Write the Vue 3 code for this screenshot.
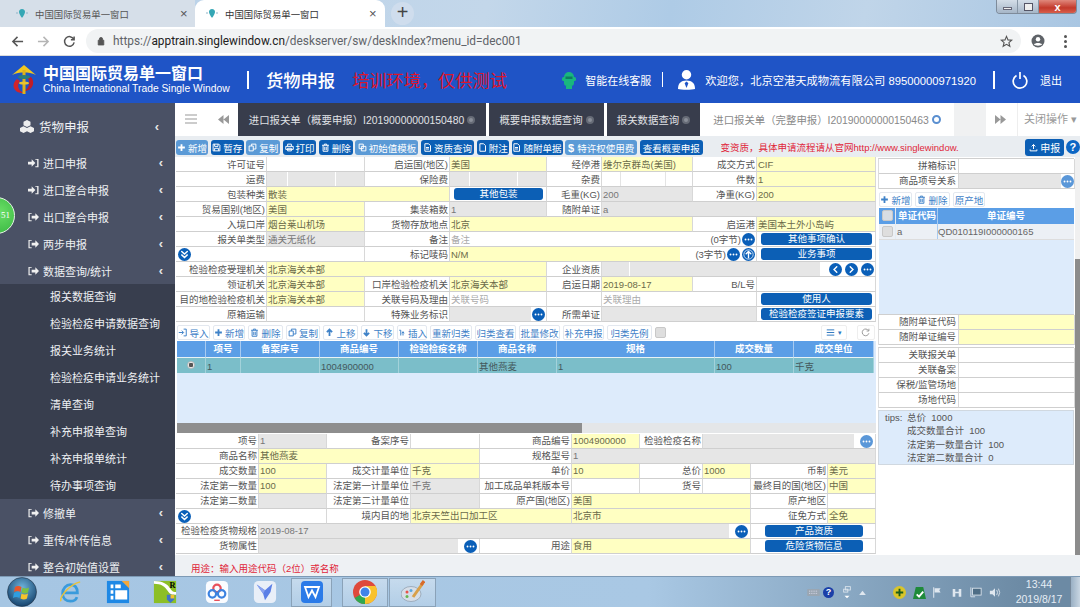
<script setup>
const lab = (t, s = 1) => ({ k: 'lab', t, s })
const y = (t = '', s = 1, x = {}) => ({ k: 'y', t, s, ...x })
const g = (t = '', s = 1, x = {}) => ({ k: 'g', t, s, ...x })
const w = (t = '', s = 1, x = {}) => ({ k: 'w', t, s, ...x })
const ph = (t = '', s = 1, x = {}) => ({ k: 'ph', t, s, ...x })
const blank = (s = 1, x = {}) => ({ k: '', t: '', s, ...x })

const form1 = [
  lab('许可证号'), w(), lab('启运国(地区)'), y('美国'), lab('经停港'), y('维尔京群岛(美国)'), lab('成交方式'), y('CIF'),
  lab('运费'), g('', 1, { boxes: [21, 48, 29] }), lab('保险费'), g('', 1, { boxes: [20, 48, 29] }), lab('杂费'), w('', 1, { boxes: [19, 45, 27] }), lab('件数'), y('1'),
  lab('包装种类'), y('散装', 2), blank(1, { btn: '其他包装' }), lab('毛重(KG)'), g('200'), lab('净重(KG)'), y('200'),
  lab('贸易国别(地区)'), y('美国'), lab('集装箱数'), g('1'), lab('随附单证'), g('a', 3),
  lab('入境口岸'), y('烟台莱山机场'), lab('货物存放地点'), y('北京', 3), lab('启运港'), y('美国本土外小岛屿'),
  lab('报关单类型'), g('通关无纸化'), lab('备注'), ph('备注', 4, { tail: '(0字节)', dots: ['more'] }), blank(1, { btn: '其他事项确认' }),
  blank(2, { dots: ['down2'], lead: true }), lab('标记唛码'), y('N/M', 4, { fw: 230, tail: '(3字节)', dots: ['more', 'up'] }), blank(1, { btn: '业务事项' }),
  lab('检验检疫受理机关'), y('北京海关本部', 3), lab('企业资质'), g('', 3, { pre: true, dots: ['left', 'right', 'more'] }),
  lab('领证机关'), y('北京海关本部'), lab('口岸检验检疫机关'), y('北京海关本部'), lab('启运日期'), y('2019-08-17'), lab('B/L号'), w(),
  lab('目的地检验检疫机关'), y('北京海关本部'), lab('关联号码及理由'), ph('关联号码'), blank(), ph('关联理由', 2), blank(1, { btn: '使用人' }),
  lab('原箱运输'), w(), lab('特殊业务标识'), g('', 1, { dots: ['more'] }), lab('所需单证'), g('', 2), blank(1, { btn: '检验检疫签证申报要素' })
]

const form2 = [
  lab('项号'), g('1'), lab('备案序号'), w(), lab('商品编号'), y('1004900000'), lab('检验检疫名称'), g('', 3, { dots: ['more'], light: true }),
  lab('商品名称'), y('其他燕麦', 3), lab('规格型号'), g('1', 5),
  lab('成交数量'), y('100'), lab('成交计量单位'), y('千克'), lab('单价'), y('10'), lab('总价'), y('1000'), lab('币制'), y('美元'),
  lab('法定第一数量'), y('100'), lab('法定第一计量单位'), g('千克'), lab('加工成品单耗版本号'), w(), lab('货号'), w(), lab('最终目的国(地区)'), y('中国'),
  lab('法定第二数量'), g(), lab('法定第二计量单位'), g(), lab('原产国(地区)'), y('美国', 3), lab('原产地区'), w(),
  blank(2, { dots: ['down2'], lead: true }), lab('境内目的地'), y('北京天竺出口加工区', 2), y('北京市', 3), lab('征免方式'), y('全免'),
  lab('检验检疫货物规格'), g('2019-08-17', 7, { dots: ['more'] }), blank(2, { btn: '产品资质', wide: true }),
  lab('货物属性'), g('', 3, { dots: ['more'] }), lab('用途'), y('食用', 3), blank(2, { btn: '危险货物信息', wide: true })
]

const sections = [
  { id: 'top', cls: 'grid-top', cells: form1 },
  { id: 'bot', cls: 'grid-bot', cells: form2 }
]

const ic = {
  plus: 'M6 1.5v9M1.5 6h9',
  save: 'M1.5 1.5h7.5l1.5 1.5v7.5h-9zM3.5 1.5v3h4.5v-3M3.5 10.5V7h5v3.5',
  copy: 'M1.5 4h5.5v6.5H1.5zM4.5 4V1.5h6v6.5H7',
  print: 'M3.5 4V1.5h5V4M1 4.5h10v4H1zM3.5 7h5v3.5h-5z',
  trash: 'M1.5 3h9M4.5 3V1.5h3V3M2.8 3v8h6.4V3M5 5v4.5M7 5v4.5',
  tpl: 'M1.5 1.5h5.5v6H1.5zM4.5 4.5h6v6h-6z',
  doc: 'M2.5 1h5l2.5 2.5V11h-7.5zM4 6h4M4 8h4',
  attach: 'M2.5 1h5l2.5 2.5V11h-7.5z',
  imp: 'M1 6h6M5 3.5 7.5 6 5 8.5M7.5 1.5h3.5v9H7.5',
  up: 'M6 10.5V2M2.5 5.5 6 2l3.5 3.5',
  down: 'M6 1.5V10M2.5 6.5 6 10l3.5-3.5',
  ins: 'M3 3h2v7M8 10V5M6.5 7 8 5l1.5 2',
  upload: 'M6 8V2M3.5 4.5 6 2l2.5 2.5M1.5 8.5v2h9v-2'
}

const tool1 = [
  { t: '新增', i: 'plus', w: 32, light: true }, { t: '暂存', i: 'save', w: 33 }, { t: '复制', i: 'copy', w: 34, light: true },
  { t: '打印', i: 'print', w: 33 }, { t: '删除', i: 'trash', w: 34 }, { t: '初始值模板', i: 'tpl', w: 63, light: true },
  { t: '资质查询', i: 'doc', w: 53 }, { t: '附注', i: 'attach', w: 32 }, { t: '随附单据', i: 'doc', w: 51 },
  { t: '特许权使用费', i: '$', w: 72, light: true }, { t: '查看概要申报', i: '', w: 63 }
]
const tool2 = [
  { t: '导入', i: 'imp', w: 33 }, { t: '新增', i: 'plus', w: 32 }, { t: '删除', i: 'trash', w: 35 }, { t: '复制', i: 'copy', w: 34 },
  { t: '上移', i: 'up', w: 35 }, { t: '下移', i: 'down', w: 33 }, { t: '插入', i: 'ins', w: 30 }, { t: '重新归类', i: '', w: 42 },
  { t: '归类查看', i: '', w: 41 }, { t: '批量修改', i: '', w: 41 }, { t: '补充申报', i: '', w: 41 }, { t: '归类先例', i: '', w: 45 }
]
const heads = [['', 29], ['项号', 35], ['备案序号', 79], ['商品编号', 79], ['检验检疫名称', 79], ['商品名称', 79], ['规格', 158], ['成交数量', 79], ['成交单位', 80]]
const row = ['', '1', '', '1004900000', '', '其他燕麦', '1', '100', '千克']

const navTop = [
  { t: '进口申报', i: 'in' }, { t: '进口整合申报', i: 'in' }, { t: '出口整合申报', i: 'out' },
  { t: '两步申报', i: 'out' }, { t: '数据查询/统计', i: 'out' }
]
const navSub = ['报关数据查询', '检验检疫申请数据查询', '报关业务统计', '检验检疫申请业务统计', '清单查询', '补充申报单查询', '补充申报单统计', '待办事项查询']
const navBot = [{ t: '修撤单', i: 'out' }, { t: '重传/补传信息', i: 'out' }, { t: '整合初始值设置', i: 'out' }]

const dotG = {
  more: 'M3.8 7h.01M7 7h.01M10.2 7h.01',
  left: 'M8.4 4 5.4 7l3 3',
  right: 'M5.6 4l3 3-3 3',
  up: 'M7 10.5V4M4.5 6.2 7 3.8l2.5 2.4',
  down2: 'M4 3.8 7 6.6l3-2.8M4 7.4l3 2.8 3-2.8'
}
const tabsDark = [
  { t: '进口报关单（概要申报）I20190000000150480', w: 248 },
  { t: '概要申报数据查询', w: 115 },
  { t: '报关数据查询', w: 93 }
]
const relate = ['关联报关单', '关联备案', '保税/监管场地', '场地代码']
</script>

<template>
  <div class="page">
    <div class="strip">
      <div class="ctab idle">
        <svg class="fav" viewBox="0 0 12 12"><path d="M6 1c2 0 3 1.4 3 3 0 2-3 6-3 6S3 6 3 4c0-1.600 1-3 3-3z" fill="#35a7b5" /><path d="M0 5h2M10 5h2" stroke="#8fb5c9" /></svg>
        <span class="ctitle">中国国际贸易单一窗口</span><span class="cx">×</span>
      </div>
      <div class="ctab act">
        <svg class="fav" viewBox="0 0 12 12"><path d="M6 1c2 0 3 1.4 3 3 0 2-3 6-3 6S3 6 3 4c0-1.600 1-3 3-3z" fill="#35a7b5" /><path d="M0 5h2M10 5h2" stroke="#8fb5c9" /></svg>
        <span class="ctitle">中国国际贸易单一窗口</span><span class="cx">×</span>
      </div>
      <div class="newtab">+</div>
      <div class="winbtns"><i class="wb"><b class="min"></b></i><i class="wb"><b class="max"></b></i><i class="wb close">x</i></div>
    </div>

    <div class="addr">
      <svg class="nav-ic" viewBox="0 0 14 14"><path d="M13 7H2M7 2 2 7l5 5" fill="none" stroke="#555" stroke-width="1.6" /></svg>
      <svg class="nav-ic" viewBox="0 0 14 14"><path d="M1 7h11M7 2l5 5-5 5" fill="none" stroke="#b5b5b5" stroke-width="1.6" /></svg>
      <svg class="nav-ic" viewBox="0 0 14 14"><path d="M11.500 4.500A5.200 5.200 0 1 0 12 8M12 1.500v3.500H8.500" fill="none" stroke="#555" stroke-width="1.600" /></svg>
      <div class="pill">
        <svg class="lock" viewBox="0 0 10 12"><path d="M1.500 5h7v6h-7zM3 5V3.500a2 2 0 0 1 4 0V5" fill="#555" stroke="#555" /></svg>
        <span class="url"><em>https://</em>apptrain.singlewindow.cn<em>/deskserver/sw/deskIndex?menu_id=dec001</em></span>
        <svg class="star" viewBox="0 0 14 14"><path d="M7 1.500 8.600 5.300l4 .3-3 2.600 1 4L7 10l-3.600 2.200 1-4-3-2.600 4-.3z" fill="none" stroke="#555" stroke-width="1.200" /></svg>
      </div>
      <svg class="acct" viewBox="0 0 14 14"><circle cx="7" cy="7" r="6.500" fill="#5f6368" /><circle cx="7" cy="5.200" r="2.200" fill="#fff" /><path d="M3 10.500c1-2 7-2 8 0-1 1.500-7 1.500-8 0z" fill="#fff" /></svg>
      <span class="kebab"><i></i><i></i><i></i></span>
    </div>

    <header class="hdr">
      <svg class="logo" viewBox="0 0 24 30">
        <path d="M5 14C-2 20 2 29 13 28c-6-1-9-7-5-12z" fill="#d3232a" />
        <path d="M19 12c5 6 1 14-7 14 4-2 7-7 4-13z" fill="#c01d28" />
        <path d="M12 0 24 10c-4-2-8-2.500-12-2.500S4 8 0 10z" fill="#f1c71f" />
        <rect x="10.500" y="5" width="3" height="24" fill="#e0b21a" />
        <ellipse cx="12" cy="12" rx="6" ry="2" fill="#2a7e78" />
        <ellipse cx="12" cy="18" rx="5" ry="1.600" fill="#e8c430" />
      </svg>
      <div class="brand">
        <div class="cn">中国国际贸易单一窗口</div>
        <div class="en">China International Trade Single Window</div>
      </div>
      <i class="vbar first"></i>
      <span class="modname">货物申报</span>
      <span class="warn">培训环境，仅供测试</span>
      <div class="hright">
        <svg class="robot" viewBox="0 0 14 18"><path d="M2 6a5 5 0 0 1 10 0v6a3 3 0 0 1-3 3H5a3 3 0 0 1-3-3z" fill="#19b67e" /><rect x="0" y="6" width="14" height="4" rx="1.500" fill="#19b67e" /><rect x="3.500" y="5.500" width="7" height="2.500" fill="#0e7e60" /><rect x="4" y="15" width="6" height="3" fill="#19b67e" /></svg>
        <span class="cs">智能在线客服</span>
        <i class="vbar small"></i>
        <svg class="user" viewBox="0 0 18 22"><circle cx="9" cy="6" r="5" fill="#fff" /><path d="M0 21c0-6 3-9 9-9s9 3 9 9c-3 1-15 1-18 0z" fill="#fff" /><path d="M9 13l2 2-2 5-2-5z" fill="#1f54c6" /></svg>
        <span class="welcome">欢迎您，北京空港天成物流有限公司 89500000971920</span>
        <i class="vbar"></i>
        <svg class="power" viewBox="0 0 16 18"><path d="M4.500 4.500a6.800 6.800 0 1 0 7 0M8 1v7" fill="none" stroke="#fff" stroke-width="1.700" /></svg>
        <span class="quit">退出</span>
      </div>
    </header>

    <div class="body">
      <aside class="side">
        <div class="sbadge">51</div>
        <div class="shead">
          <svg class="cubes" viewBox="0 0 14 13"><path d="M7 0l3.500 1.800v3.400L7 7 3.500 5.200V1.800zM3.500 6.200 7 8v3.200L3.500 13 0 11.200V8zM10.500 6.200 14 8v3.200L10.500 13 7 11.200V8z" fill="#eee" /></svg>
          <span>货物申报</span><span class="chev top">‹</span>
        </div>
        <div v-for="n in navTop" :key="n.t" class="nitem">
          <svg class="nic" viewBox="0 0 12 10"><path v-if="n.i === 'in'" d="M0 3.500h4V1l4 4-4 4V6.500H0zM8 .5h3.500v9H8v-1h2v-7H8z" fill="#f0f0f0" /><path v-else d="M4 .5H.5v9H4v-1H1.800v-7H4zM4 3.500h4V1l4 4-4 4V6.500H4z" fill="#f0f0f0" /></svg>
          <span>{{ n.t }}</span><span class="chev">‹</span>
        </div>
        <div class="sub"><div v-for="s in navSub" :key="s" class="sitem">{{ s }}</div></div>
        <div v-for="n in navBot" :key="n.t" class="nitem">
          <svg class="nic" viewBox="0 0 12 10"><path d="M4 .5H.5v9H4v-1H1.800v-7H4zM4 3.500h4V1l4 4-4 4V6.500H4z" fill="#f0f0f0" /></svg>
          <span>{{ n.t }}</span><span class="chev">‹</span>
        </div>
      </aside>

      <main class="main">
        <div class="tabs">
          <svg class="burger" viewBox="0 0 12 10"><path d="M0 1h12M0 5h12M0 9h12" stroke="#999" stroke-width="1.200" /></svg>
          <svg class="rew" viewBox="0 0 11 9"><path d="M5.500 0v9L0 4.500zM11 0v9L5.500 4.500z" fill="#999" /></svg>
          <div v-for="tb in tabsDark" :key="tb.t" class="dtab" :style="{ width: tb.w + 'px' }">{{ tb.t }}<i class="tx"></i></div>
          <div class="atab">进口报关单（完整申报）I20190000000150463<i class="tx on"></i></div>
          <div class="tfill"></div>
          <svg class="fwd" viewBox="0 0 11 9"><path d="M0 0v9l5.500-4.500zM5.500 0v9L11 4.500z" fill="#999" /></svg>
          <div class="closeops">关闭操作 ▾</div>
        </div>

        <div class="tool">
          <button v-for="b in tool1" :key="b.t" class="tbtn" :class="{ light: b.light }" :style="{ width: b.w + 'px' }">
            <b v-if="b.i === '$'" class="dollar">$</b>
            <svg v-else-if="b.i" class="tic" :class="{ thick: b.i === 'plus' }" viewBox="0 0 12 12"><path :d="ic[b.i]" /></svg>
            {{ b.t }}
          </button>
          <span class="notice">变资质，具体申请流程请从官网http://www.singlewindow.</span>
          <button class="tbtn submit"><svg class="tic" viewBox="0 0 12 12"><path :d="ic.upload" /></svg>申报</button>
          <span class="help">?</span>
        </div>

        <div class="work">
          <div class="col-left">
            <div class="form grid-top">
              <div v-for="(c, i) in sections[0].cells" :key="i" class="cell" :class="{ lab: c.k === 'lab', lead: c.lead }" :style="{ gridColumn: 'span ' + c.s }">
                <template v-if="c.k === 'lab'">{{ c.t }}</template>
                <template v-else>
                  <span v-if="c.boxes" class="boxes"><i v-for="(bw, j) in c.boxes" :key="j" :class="c.k" :style="{ width: bw + 'px' }"></i></span>
                  <span v-else-if="c.k" class="fill" :class="c.k" :style="c.fw ? { flex: 'none', width: c.fw + 'px' } : null"><i v-if="c.pre" class="prebox"></i>{{ c.t }}</span>
                  <span v-if="c.tail" class="tail">{{ c.tail }}</span>
                  <span v-if="c.dots" class="dots" :class="{ far: c.pre }">
                    <svg v-for="d in c.dots" :key="d" class="dot" viewBox="0 0 14 14"><circle cx="7" cy="7" r="7" :fill="c.light ? '#5a97d8' : '#0a5fb8'" /><circle v-if="d === 'up'" cx="7" cy="7" r="5" fill="none" stroke="#fff" stroke-width=".8" /><path :d="dotG[d]" class="dotp" :class="{ mp: d === 'more' }" /></svg>
                  </span>
                  <button v-if="c.btn" class="fbtn" :class="{ wide: c.wide }">{{ c.btn }}</button>
                </template>
              </div>
            </div>

            <div class="listbar">
              <button v-for="b in tool2" :key="b.t" class="lbtn" :style="{ width: b.w + 'px' }">
                <svg v-if="b.i" class="tic" :class="{ thick: b.i === 'plus' || b.i === 'up' || b.i === 'down' }" viewBox="0 0 12 12"><path :d="ic[b.i]" /></svg>{{ b.t }}
              </button>
              <span class="chk"></span>
              <span class="lspacer"></span>
              <button class="lbtn cols"><svg class="tic" viewBox="0 0 12 12"><path d="M1 2.500h10M1 6h10M1 9.500h10" /></svg><small>▾</small></button>
              <button class="lbtn refresh"><svg class="tic" viewBox="0 0 12 12"><path d="M10 3.500A4.500 4.500 0 1 0 10.500 7M10.500 1v3H7.500" /></svg></button>
            </div>
            <div class="tbl">
              <div class="thead"><span v-for="h in heads" :key="h[0]" :style="{ width: h[1] + 'px' }">{{ h[0] }}</span></div>
              <div class="trow">
                <span v-for="(v, i) in row" :key="i" :style="{ width: heads[i][1] + 'px' }">
                  <i v-if="i === 0" class="radio"></i>{{ v }}
                </span>
              </div>
              <div class="tempty"></div>
              <div class="hscroll"><i></i></div>
            </div>

            <div class="form grid-bot">
              <div v-for="(c, i) in sections[1].cells" :key="i" class="cell" :class="{ lab: c.k === 'lab', lead: c.lead }" :style="{ gridColumn: 'span ' + c.s }">
                <template v-if="c.k === 'lab'">{{ c.t }}</template>
                <template v-else>
                  <span v-if="c.k" class="fill" :class="c.k">{{ c.t }}</span>
                  <span v-if="c.dots" class="dots gapd">
                    <svg v-for="d in c.dots" :key="d" class="dot" viewBox="0 0 14 14"><circle cx="7" cy="7" r="7" :fill="c.light ? '#5a97d8' : '#0a5fb8'" /><path :d="dotG[d]" class="dotp" :class="{ mp: d === 'more' }" /></svg>
                  </span>
                  <button v-if="c.btn" class="fbtn" :class="{ wide: c.wide }">{{ c.btn }}</button>
                </template>
              </div>
            </div>
          </div>

          <div class="col-right">
            <div class="rgrid">
              <div class="rl">拼箱标识</div><div class="rv"></div>
              <div class="rl">商品项号关系</div>
              <div class="rv gr"><span class="fill g"></span><svg class="dot" viewBox="0 0 14 14"><circle cx="7" cy="7" r="7" fill="#5a97d8" /><path :d="dotG.more" class="dotp mp" /></svg></div>
            </div>
            <div class="rbar">
              <button class="lbtn rb33"><svg class="tic thick" viewBox="0 0 12 12"><path :d="ic.plus" /></svg>新增</button>
              <button class="lbtn rb35"><svg class="tic" viewBox="0 0 12 12"><path :d="ic.trash" /></svg>删除</button>
              <button class="lbtn rb32">原产地</button>
            </div>
            <div class="rhead"><span class="rc0"><i class="chk hchk"></i></span><span class="rc1">单证代码</span><span class="rc2">单证编号</span></div>
            <div class="rrow"><span class="rc0"><i class="chk"></i></span><span class="rc1">a</span><span class="rc2 tl">QD010119I000000165</span></div>
            <div class="rempty"></div>
            <div class="rgrid">
              <div class="rl">随附单证代码</div><div class="rv ye"></div>
              <div class="rl">随附单证编号</div><div class="rv ye"></div>
            </div>
            <div class="rgrid mt3">
              <template v-for="r in relate" :key="r"><div class="rl">{{ r }}</div><div class="rv"></div></template>
            </div>
            <div class="tips">
              <div><span class="tk">tips:</span>总价&nbsp;&nbsp;1000</div>
              <div class="ti">成交数量合计&nbsp;&nbsp;100</div>
              <div class="ti">法定第一数量合计&nbsp;&nbsp;100</div>
              <div class="ti">法定第二数量合计&nbsp;&nbsp;0</div>
            </div>
          </div>

          <div class="vscroll"><i></i></div>
        </div>

        <div class="hint">用途：输入用途代码（2位）或名称</div>
      </main>
    </div>

    <footer class="taskbar">
      <svg class="orb" viewBox="0 0 30 30">
        <defs><radialGradient id="og" cx=".5" cy=".35" r=".7"><stop offset="0" stop-color="#6fb4dc" /><stop offset="1" stop-color="#0f3b66" /></radialGradient></defs>
        <circle cx="15" cy="15" r="14.500" fill="url(#og)" stroke="#234" stroke-width=".6" />
        <path d="M8 10q3-2 6.500 0l-1 5q-3-2-6.500 0z" fill="#e8562a" /><path d="M15.500 10.500q3 2 6.500 0l-1 5q-3 2-6.500 0z" fill="#7cc242" />
        <path d="M7 16q3-2 6.500 0l-1 5q-3-2-6.500 0z" fill="#2f9ee0" /><path d="M14.500 16.500q3 2 6.500 0l-1 5q-3 2-6.500 0z" fill="#f6c32c" />
      </svg>
      <svg class="tk26 ie" viewBox="0 0 26 26"><path d="M7 14h14c0-6-3-9-7.500-9S5 9 5 14.500 9 23 13.500 23c3.500 0 6-1.500 7-4.500" fill="none" stroke="#3a9bdc" stroke-width="3" /><path d="M3 23C2 18 12 5 24 2" fill="none" stroke="#e9c23a" stroke-width="1.600" /></svg>
      <svg class="tk26 fo" viewBox="0 0 26 26"><path d="M1 1h24v24H1z" fill="#1e88e5" /><path d="M17 1h8v8z" fill="#f2a83b" /><path d="M5 5h3v4H5zM5 11h3v4H5zM5 17h3v4H5zM10 11h13v10H10zM10 5h6v4h-6z" fill="#fff" /></svg>
      <svg class="tk26 rr" viewBox="0 0 26 26"><path d="M1 1h24v24H1z" fill="#8cbf26" /><path d="M1 4c8 0 12 3 15 8s6 4 9 4v-3c-4 0-5-2-7-5S11 1 1 1z" fill="#fff" /><text x="18" y="9" font-size="9" font-weight="700" font-family="Liberation Serif">R</text><path d="M15 16h8v5l-4 4-4-4z" fill="#3f74c9" /><path d="M19 16h4v4h-4z" fill="#f2c230" /></svg>
      <svg class="tk26 bd" viewBox="0 0 26 26"><rect x="1" y="1" width="24" height="24" rx="5" fill="#fafcff" /><circle cx="13" cy="9" r="4" fill="none" stroke="#e8505b" stroke-width="2.400" /><circle cx="8" cy="15" r="4" fill="none" stroke="#3b82e0" stroke-width="2.400" /><circle cx="18" cy="15" r="4" fill="none" stroke="#3b82e0" stroke-width="2.400" /><path d="M10 22h6" stroke="#e8505b" stroke-width="1.500" /></svg>
      <svg class="tk26 fe" viewBox="0 0 26 26"><rect x="1" y="1" width="24" height="24" rx="5" fill="#e9eff8" /><path d="M4 5l9 6 8-7-2 9-6 9-2-7z" fill="#5b7fe6" /><path d="M4 5l9 6-2 4z" fill="#8aa3ef" /></svg>
      <div class="tslot wps"><svg class="tk22" viewBox="0 0 22 22"><rect width="22" height="22" rx="4" fill="#2b7be8" /><path d="M4 6h14l-3.500 10-3.500-6.500L7.500 16z" fill="none" stroke="#fff" stroke-width="1.800" /></svg></div>
      <div class="tslot chrome"><svg class="tk24" viewBox="0 0 24 24"><circle cx="12" cy="12" r="12" fill="#de4a3c" /><path d="M12 12 1.600 18A12 12 0 0 0 12 24a12 12 0 0 0 4-1z" fill="#2fa84f" /><path d="M12 6h10.500A12 12 0 0 1 12 24z" fill="#f9c22d" /><circle cx="12" cy="12" r="5.800" fill="#fff" /><circle cx="12" cy="12" r="4.500" fill="#3f84e8" /></svg></div>
      <div class="tslot paint"><svg class="tk24" viewBox="0 0 24 24"><ellipse cx="10" cy="14" rx="10" ry="7.500" fill="#d6dee8" stroke="#8d9bab" stroke-width=".7" /><circle cx="6" cy="12" r="1.500" fill="#e9534a" /><circle cx="10" cy="10.500" r="1.500" fill="#5aa7e0" /><circle cx="6" cy="16.500" r="1.500" fill="#66b650" /><path d="M12 17 22 3" stroke="#d8a04a" stroke-width="3" /><path d="M20 5 23 1" stroke="#d86b2a" stroke-width="3" /></svg></div>
      <div class="tray">
        <svg class="tr1" viewBox="0 0 14 10"><rect y="1" width="14" height="8" rx="1" fill="#9aa6b2" /><path d="M2 3.500h10M2 6h10" stroke="#dde" stroke-dasharray="1 1" /></svg>
        <span class="trq">?</span>
        <svg class="tr2" viewBox="0 0 12 16"><rect x="4" y="1" width="6" height="4" fill="none" stroke="#dfe7ef" /><rect x="2" y="4" width="5" height="3.500" fill="none" stroke="#dfe7ef" /><path d="M3 12h6l-3 3z" fill="#fff" /></svg>
        <svg class="tr3" viewBox="0 0 8 6"><path d="M0 6 4 1l4 5z" fill="#dfe7ef" /></svg>
        <svg class="tr4" viewBox="0 0 14 14"><circle cx="7" cy="7" r="7" fill="#d9c52a" /><path d="M7 3v8M3 7h8" stroke="#1a5c1a" stroke-width="2" /></svg>
        <svg class="tr5" viewBox="0 0 14 14"><path d="M3 1h8l3 13H0z" fill="#1f8a3a" /><path d="M4 9l2.500 2.500L11 6" fill="none" stroke="#fff" stroke-width="2" /></svg>
        <svg class="tr6" viewBox="0 0 14 14"><path d="M2 1v12" stroke="#dfe7ef" stroke-width="1.200" /><path d="M3 2h7l-1.500 2.500L10 7H3z" fill="#dfe7ef" /></svg>
        <svg class="tr6" viewBox="0 0 14 14"><path d="M2 3h3v9H2zM9 3h3v9H9zM5 6h4v2H5z" fill="#dfe7ef" /></svg>
        <svg class="tr6" viewBox="0 0 14 14"><rect x="3" y="2" width="10" height="8" fill="#4e6d85" stroke="#dfe7ef" /><path d="M1 1v11h5" fill="none" stroke="#dfe7ef" /></svg>
        <svg class="tr6" viewBox="0 0 14 14"><path d="M1 5h3l3-3v10L4 9H1z" fill="#dfe7ef" /><path d="M9 4q2 3 0 6M11 2.500q3 4.500 0 9" fill="none" stroke="#dfe7ef" /></svg>
        <div class="clock"><div>13:44</div><div>2019/8/17</div></div>
        <div class="showdesk"></div>
      </div>
    </footer>
  </div>
</template>

<style>
html, body { margin: 0; padding: 0; overflow: hidden; }
</style>

<style scoped>
.page { width: 1080px; height: 607px; overflow: hidden; display: flex; flex-direction: column; font-family: "Liberation Sans", "Noto Sans CJK SC", sans-serif; color: #444; background: #fff; }
.page * { box-sizing: border-box; }
button { font-family: inherit; border: 0; padding: 0; }
i, em { font-style: normal; }

.strip { height: 27px; flex: none; display: flex; align-items: stretch; background: linear-gradient(100deg, #b7d0e8 0%, #c3d7ea 45%, #aecbe6 62%, #c0d5e9 80%, #a9c6e2 100%); }
.ctab { display: flex; align-items: center; font-size: 9.4px; color: #555; }
.ctab.idle { width: 195px; padding-left: 16px; background: #d6dfe9; border-radius: 0 0 0 0; }
.ctab.act { width: 190px; padding-left: 11px; background: #fff; border-radius: 9px 9px 0 0; color: #333; }
.fav { width: 12px; height: 12px; margin-right: 7px; }
.ctitle { width: 144px; white-space: nowrap; }
.ctab.idle .ctitle { width: 145px; }
.cx { font-size: 13px; color: #555; }
.newtab { width: 23px; height: 23px; margin: 2px 0 0 6px; border-radius: 50%; background: #cfdded; color: #444; font-size: 20px; line-height: 21px; text-align: center; }
.winbtns { margin-left: auto; margin-right: 3px; width: 81px; height: 14px; display: flex; border: 1px solid #7e8b9a; border-top: 0; border-radius: 0 0 4px 4px; overflow: hidden; }
.wb { flex: 0 0 21px; background: linear-gradient(#d3dde8, #a6b6c7); border-right: 1px solid #8796a6; position: relative; display: flex; align-items: center; justify-content: center; }
.wb .min { width: 9px; height: 3px; background: #eee; border: 1px solid #667; margin-top: 4px; }
.wb .max { width: 9px; height: 8px; border: 1.500px solid #556; background: #eee; }
.wb.close { flex: 1; background: linear-gradient(#e0887c, #c3392b 60%, #d85f4c); color: #fff; font-size: 11px; font-weight: 700; border: 0; }

.addr { height: 29px; flex: none; display: flex; align-items: center; background: #fff; border-bottom: 1px solid #dcdcdc; padding-left: 11px; }
.nav-ic { width: 13px; height: 13px; margin-right: 13px; }
.pill { width: 935px; height: 24px; margin-left: -3px; border-radius: 12px; background: #f1f3f4; display: flex; align-items: center; padding-left: 11px; }
.lock { width: 8px; height: 10px; margin-right: 8px; }
.url { font: 11.850px Roboto, "Liberation Sans", sans-serif; color: #222; white-space: nowrap; }
.url em { color: #5f6368; }
.star { width: 13px; height: 13px; margin-left: auto; margin-right: 8px; }
.acct { width: 14px; height: 14px; margin-left: 10px; }
.kebab { display: flex; flex-direction: column; gap: 2px; margin-left: 19px; }
.kebab i { width: 3px; height: 3px; border-radius: 50%; background: #555; }

.hdr { height: 47px; flex: none; background: #1f54c6; display: flex; align-items: center; padding-left: 12px; color: #fff; }
.logo { width: 24px; height: 30px; }
.brand { margin-left: 7px; width: 186px; }
.cn { font-size: 16px; line-height: 19px; font-weight: 700; white-space: nowrap; }
.en { font-size: 10.300px; line-height: 12px; white-space: nowrap; font-family: "Liberation Sans", sans-serif; }
.vbar { width: 2px; height: 18px; background: #fff; margin: 0 17px 0 17px; flex: none; }
.vbar.first { margin-left: 18px; }
.vbar.small { height: 15px; margin: 0 15px 0 11px; width: 1px; }
.modname { font-size: 17.300px; font-weight: 500; white-space: nowrap; }
.warn { margin-left: 17px; font-size: 17.200px; color: #dc152b; white-space: nowrap; }
.hright { margin-left: auto; display: flex; align-items: center; padding-right: 18px; }
.robot { width: 14px; height: 18px; margin-right: 9px; }
.cs { font-size: 11px; white-space: nowrap; }
.user { width: 17px; height: 21px; margin-right: 10px; }
.welcome { font-size: 11.250px; white-space: nowrap; }
.power { width: 16px; height: 18px; margin-right: 12px; }
.quit { font-size: 11px; }

.body { height: 473px; flex: none; display: flex; }
.side { width: 175px; flex: none; background: #4a5165; color: #eef0f3; position: relative; overflow: hidden; }
.sbadge { position: absolute; left: -22px; top: 94px; width: 37px; height: 37px; border-radius: 50%; background: radial-gradient(circle at 60% 40%, #6adf66, #2fae3b); border: 1px solid #e8f3e8; color: #fff; font: 9px "Liberation Serif", serif; line-height: 35px; text-align: right; padding-right: 4px; z-index: 2; }
.shead { height: 46px; display: flex; align-items: center; padding-left: 20px; font-size: 12.500px; }
.cubes { width: 14px; height: 13px; margin-right: 5px; }
.chev { margin-left: auto; margin-right: 12px; font: 700 13px "Liberation Sans", sans-serif; color: #e6e6e6; }
.chev.top { margin-right: 16px; }
.nitem { height: 27px; display: flex; align-items: center; padding-left: 28px; font-size: 11px; }
.nic { width: 11px; height: 10px; margin-right: 4px; }
.sub { background: #383e4e; height: 215px; }
.sitem { height: 27px; line-height: 27px; padding-left: 50px; font-size: 11px; white-space: nowrap; }

.main { flex: 1; min-width: 0; display: flex; flex-direction: column; background: #eef1f4; }
.tabs { height: 33px; flex: none; display: flex; align-items: stretch; background: #fff; }
.burger { width: 12px; height: 10px; margin: 11px 21px 0 10px; }
.rew { width: 11px; height: 9px; margin: 12px 9px 0 0; }
.dtab { background: #383d4c; color: #e0e2e6; font-size: 10.400px; display: flex; align-items: center; justify-content: center; margin-right: 3px; white-space: nowrap; }
.tx { width: 8px; height: 8px; border-radius: 50%; background: #8a8f99; margin-left: 3px; border: 2px solid #666b76; }
.atab { width: 254px; margin-left: -3px; background: #fff; color: #888; font-size: 10.400px; display: flex; align-items: center; justify-content: center; white-space: nowrap; }
.tx.on { background: #fff; border: 2.500px solid #5a8fd0; width: 9px; height: 9px; }
.tfill { width: 32px; background: #f0f1f2; }
.fwd { width: 11px; height: 9px; margin: 12px 11px 0 9px; }
.closeops { border-left: 1px solid #eee; padding-left: 6px; font-size: 11px; color: #999; line-height: 33px; flex: 1; white-space: nowrap; }

.tool { height: 21px; flex: none; display: flex; align-items: flex-start; padding: 4px 0 0 1px; gap: 2.700px; background: #e9edf1; }
.tbtn { height: 15px; border-radius: 3px; background: #0c5fb5; color: #fff; font-size: 9.500px; display: inline-flex; align-items: center; justify-content: center; white-space: nowrap; flex: none; }
.tbtn.light { background: #5b9ad6; }
.tic { width: 9px; height: 9px; margin-right: 2px; fill: none; stroke: currentColor; stroke-width: 1.300; flex: none; }
.tic.thick { stroke-width: 2.400; }
.dollar { font-size: 11px; margin-right: 3px; }
.notice { margin-left: 15px; width: 239px; font-size: 9.500px; color: #e0263a; white-space: nowrap; overflow: hidden; line-height: 15px; flex: none; }
.tbtn.submit { width: 39px; margin-left: 63px; height: 17px; font-size: 10px; margin-top: -1px; }
.help { width: 14px; height: 14px; border-radius: 50%; background: #0c66c4; color: #fff; font: 700 11px/14px "Liberation Sans", sans-serif; text-align: center; flex: none; margin-left: -1px; }

.work { height: 398px; flex: none; display: flex; background: #fff; }
.col-left { width: 700px; margin-left: 1px; flex: none; display: flex; flex-direction: column; }
.form { display: grid; grid-auto-rows: 15px; border-top: 0; }
.grid-top { grid-template-columns: 91px 98px 85px 97px 55px 91px 64px 119px; }
.grid-bot { grid-template-columns: 83px 68px 84px 69px 92px 68px 63px 48px 77px 48px; margin-top: 1px; }
.cell { display: flex; align-items: stretch; min-width: 0; background: #fff; border-right: 1px solid #d8d8d8; border-bottom: 1px solid #cfcfcf; font-size: 9.500px; line-height: 14px; overflow: hidden; }
.grid-top .cell { line-height: 15px; }
.cell.lab { justify-content: flex-end; padding-right: 1px; color: #555; white-space: nowrap; }
.cell.lead { align-items: center; }
.fill { flex: 1; min-width: 0; padding-left: 1px; white-space: nowrap; overflow: hidden; display: flex; color: #6b6b4a; }
.y { background: #ffffc2; }
.g { background: #e6e6e6; color: #777; }
.w { background: #fff; }
.ph { background: #fff; color: #aaa; }
.prebox { width: 28px; border-right: 1px solid #fff; margin-left: -1px; }
.boxes { display: flex; flex: 1; }
.boxes i { border-right: 1px solid #fff; }
.boxes i.w { border-right: 1px solid #e4e4e4; }
.boxes i:last-child { flex: 1; }
.tail { color: #555; white-space: nowrap; margin-left: auto; flex: none; }
.dots { display: flex; gap: 2px; flex: none; align-items: center; padding: 0 1px 0 1px; background: #fff; }
.dots.far { padding-left: 9px; gap: 3px; }
.dots.gapd { padding-left: 6px; padding-right: 2px; }
.lead .dots { padding-left: 2px; }
.dot { width: 13px; height: 13px; flex: none; }
.dotp { fill: none; stroke: #fff; stroke-width: 1.500; stroke-linecap: round; }
.dotp.mp { stroke-width: 2; }
.fbtn { flex: 1; margin: 1px 3px 1px 4px; border-radius: 3px; background: #0c5fb5; color: #fff; font-size: 9.500px; line-height: 12px; white-space: nowrap; }
.fbtn.wide { margin: 1px 12px 1px 14px; }

.listbar { height: 19px; flex: none; display: flex; align-items: flex-end; gap: 3px; padding: 0 0 1px 1px; }
.lbtn { height: 15px; background: #fff; border: 1px solid #e3e8ef; border-radius: 2px; color: #3f82c8; font-size: 9.500px; display: inline-flex; align-items: center; justify-content: center; white-space: nowrap; flex: none; }
.rb33 { width: 33px; }
.rb35 { width: 35px; }
.rb32 { width: 32px; }
.chk { width: 11px; height: 11px; background: #dedede; border: 1px solid #c8c8c8; border-radius: 2px; display: inline-block; flex: none; margin-bottom: 2px; }
.lspacer { flex: 1; }
.cols { width: 26px; margin-right: 7px; border-color: #eee; color: #2f78c0; }
.cols small { font-size: 7px; margin-left: 1px; }
.refresh { width: 18px; border-color: #eee; color: #999; margin-right: 1px; }
.tbl { margin-left: 1px; flex: none; background: #ddebfb; }
.thead, .trow { display: flex; height: 16px; }
.thead span { background: #5b9ee6; color: #fff; font-size: 9.500px; font-weight: 700; text-align: center; line-height: 15px; border-right: 1px solid #a8cbf1; }
.trow span { background: #7bbec9; color: #44585c; font-size: 9.500px; line-height: 17px; padding-left: 1px; border-right: 1px solid #a3d2da; border-top: 1px solid #e8f3f5; display: block; }
.radio { display: block; width: 8px; height: 8px; margin: 3px 0 0 9px; border-radius: 50%; background: radial-gradient(circle, #555 0 2px, #eee 2.500px); border: 1px solid #bbb; }
.tempty { height: 50px; }
.hscroll { height: 10px; background: #e4e6e8; }
.hscroll i { display: block; width: 405px; height: 100%; background: #8e8e8e; }

.col-right { width: 196px; margin-left: 2px; flex: none; display: flex; flex-direction: column; font-size: 9.500px; padding-top: 1px; border-left: 0; }
.rgrid { display: grid; grid-template-columns: 80px 116px; grid-auto-rows: 15px; border-top: 1px solid #cfcfcf; border-left: 1px solid #dcdcdc; flex: none; }
.rl { text-align: right; padding-right: 2px; color: #555; line-height: 14px; border-bottom: 1px solid #cfcfcf; border-right: 1px solid #d8d8d8; white-space: nowrap; }
.rv { border-bottom: 1px solid #cfcfcf; border-right: 1px solid #d8d8d8; }
.rv.ye { background: #ffffc2; }
.rv.gr { display: flex; align-items: center; }
.rv.gr .fill { align-self: stretch; }
.rbar { display: flex; gap: 3px; height: 19px; padding: 3px 0 0 1px; align-items: flex-start; flex: none; }
.rhead, .rrow { display: flex; height: 16px; flex: none; margin-left: 1px; }
.rhead { background: #5b9ee6; color: #fff; font-weight: 700; text-align: center; line-height: 15px; }
.rrow { background: #ecf0f5; color: #666; line-height: 16px; border-bottom: 1px solid #ddd; }
.rc0 { width: 17px; display: flex; align-items: center; justify-content: center; border-right: 1px solid #e3ebf3; }
.rc1 { width: 42px; padding-left: 1px; border-right: 1px solid #a8cbf1; text-align: left; white-space: nowrap; }
.rhead .rc1 { text-align: center; }
.rc2 { flex: 1; }
.tl { text-align: left; padding-left: 0; }
.rrow .chk { margin: 0; }
.hchk { background: #d8dde3; }
.rempty { height: 74px; flex: none; margin-left: 1px; background: #ddebfb; }
.mt3 { margin-top: 2px; }
.tips { height: 55px; margin: 2px 0 0 0; background: #ddebfb; border: 1px solid #d0d8e0; padding: 0 0 0 6px; color: #555; font-size: 9.500px; line-height: 13.300px; flex: none; }
.tk { display: inline-block; width: 22px; }
.ti { padding-left: 22px; }
.vscroll { flex: 1; margin-left: 1px; background: #f0f0f0; }
.vscroll i { display: block; margin-top: 102px; height: 296px; background: #8c8c8c; }
.hint { height: 21px; flex: none; padding: 7px 0 0 16px; font-size: 9.500px; color: #e0263a; background: #eef1f4; line-height: 14px; }

.taskbar { height: 31px; flex: none; display: flex; align-items: center; background: linear-gradient(90deg, #a6c6e3 0%, #a9c8e4 60%, #8aa9c4 78%, #6c8aa4 95%); border-top: 1px solid #7d9ab5; position: relative; }
.orb { width: 30px; height: 30px; margin-left: 7px; flex: none; }
.tk26 { width: 24px; height: 24px; flex: none; }
.ie { margin-left: 21px; }
.fo { margin-left: 24px; }
.rr { margin-left: 23px; }
.bd { margin-left: 28px; }
.fe { margin-left: 24px; }
.tslot { height: 29px; display: flex; align-items: center; justify-content: center; flex: none; border: 1px solid #8aa2b8; background: linear-gradient(rgba(255,255,255,.35), rgba(255,255,255,.12)); }
.wps { width: 41px; margin-left: 14px; }
.chrome { width: 46px; margin-left: 10px; }
.paint { width: 47px; margin-left: 1px; }
.tk22 { width: 22px; height: 22px; }
.tk24 { width: 24px; height: 24px; }
.tray { margin-left: auto; display: flex; align-items: center; height: 100%; color: #e6edf4; }
.tr1 { width: 13px; height: 9px; margin-right: 3px; }
.trq { width: 11px; height: 11px; border-radius: 50%; background: #1b3fa8; color: #fff; font: 700 9px/11px "Liberation Sans", sans-serif; text-align: center; margin-right: 8px; }
.tr2 { width: 10px; height: 15px; margin-right: 7px; }
.tr3 { width: 7px; height: 5px; margin-right: 27px; }
.tr4 { width: 13px; height: 13px; margin-right: 7px; }
.tr5 { width: 13px; height: 13px; margin-right: 6px; }
.tr6 { width: 12px; height: 13px; margin-right: 7px; }
.clock { width: 58px; margin-left: 2px; text-align: center; font-size: 10.500px; line-height: 15px; }
.showdesk { width: 10px; height: 100%; margin-left: 2px; background: linear-gradient(90deg, #9ab0c4, #c9d6e2); border-left: 1px solid #77899b; }
</style>
